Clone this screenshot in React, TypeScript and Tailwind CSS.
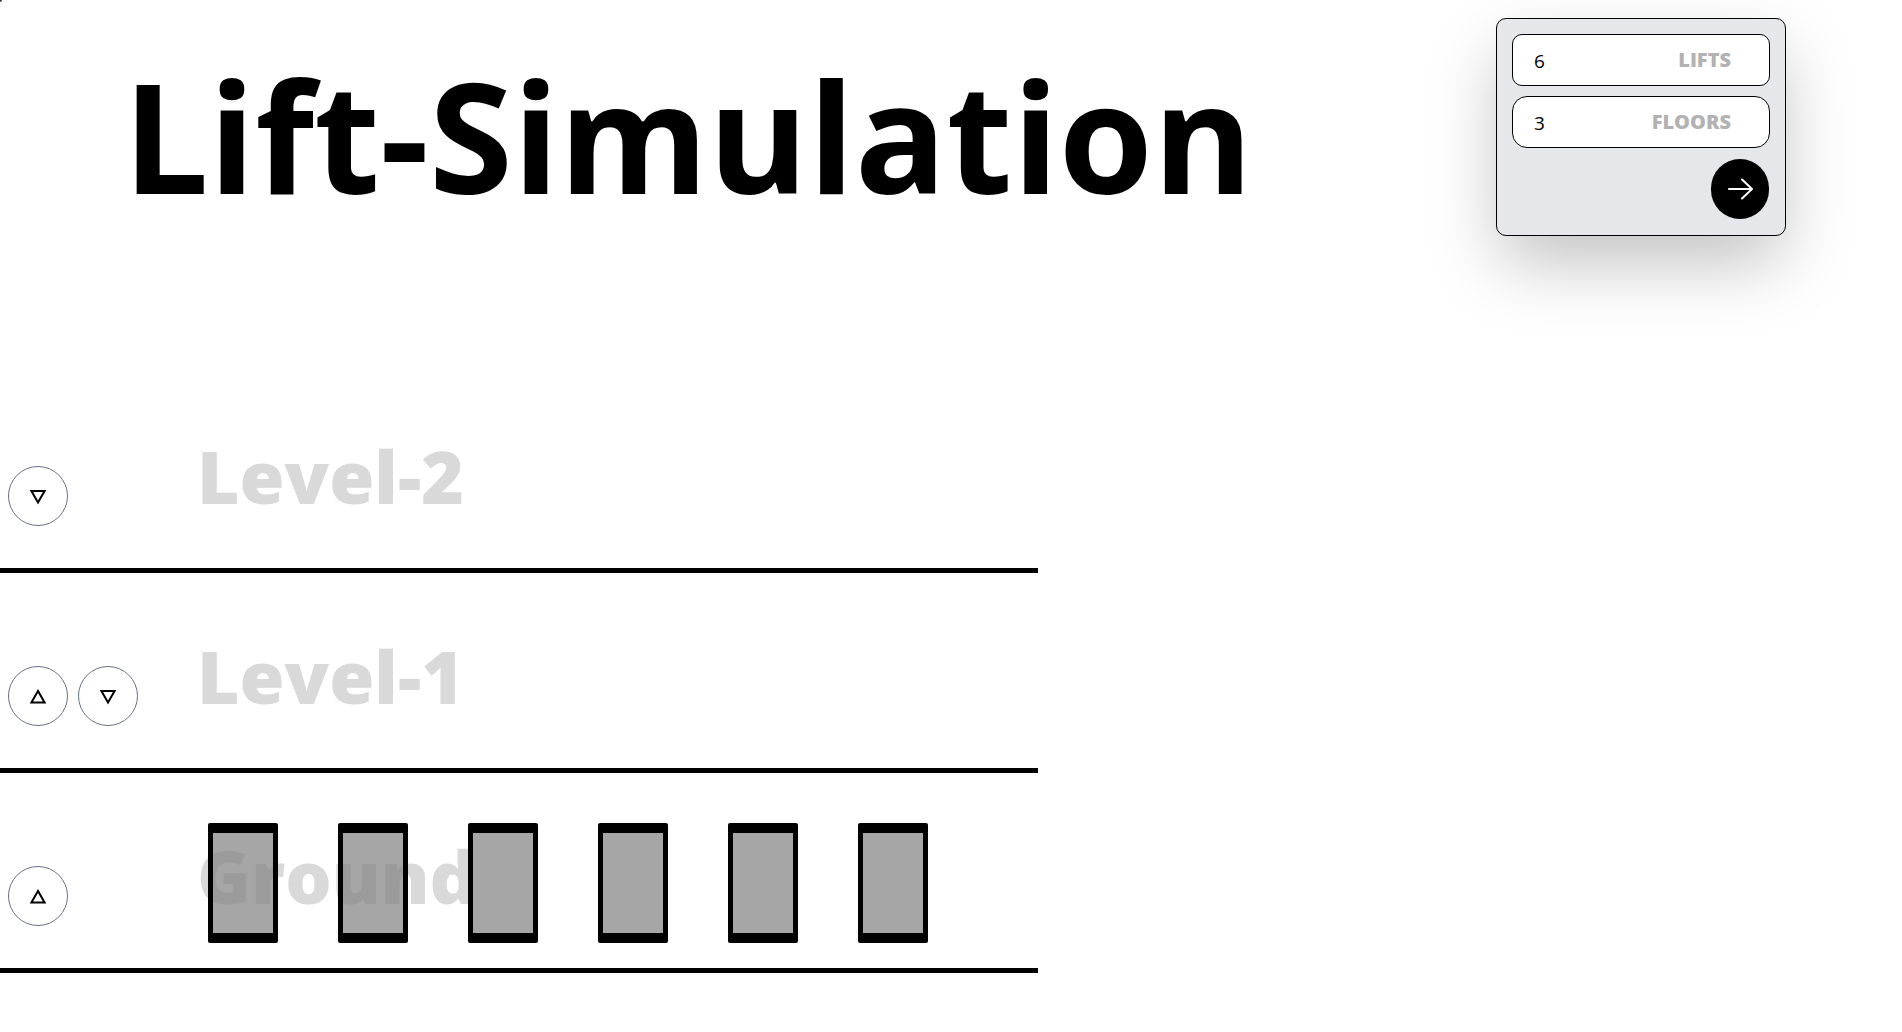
import { useState } from "react";

type Direction = "up" | "down";

interface Floor {
  name: string;
  calls: Direction[];
}

function buildFloors(count: number): Floor[] {
  return Array.from({ length: count }, (_, i) => {
    const level = count - 1 - i;
    const calls: Direction[] = [];
    if (level < count - 1) calls.push("up");
    if (level > 0) calls.push("down");
    return { name: level === 0 ? "Ground" : `Level-${level}`, calls };
  });
}

function CallButton({ direction }: { direction: Direction }) {
  return (
    <button
      type="button"
      aria-label={direction === "up" ? "Call lift up" : "Call lift down"}
      className="flex size-[60px] items-center justify-center rounded-full border border-gray-500 bg-white"
    >
      <svg width="18" height="18" viewBox="0 0 18 18" fill="none" stroke="#000" strokeWidth="2">
        <path d={direction === "up" ? "M9 4 L15.6 15.5 H2.4 Z" : "M9 15.5 L15.6 4 H2.4 Z"} />
      </svg>
    </button>
  );
}

function Field({
  id,
  label,
  value,
  onChange,
  rounding,
}: {
  id: string;
  label: string;
  value: string;
  onChange: (value: string) => void;
  rounding: string;
}) {
  return (
    <div className={`flex h-[52px] items-center border border-black bg-white pr-[38px] pl-[21px] ${rounding}`}>
      <input
        id={id}
        type="text"
        inputMode="numeric"
        value={value}
        onChange={(e) => onChange(e.target.value)}
        className="w-0 flex-1 pt-0.5 text-[19px] leading-7 outline-none"
      />
      <label htmlFor={id} className="text-xl leading-6 font-black text-[#b2b2b2]">
        {label}
      </label>
    </div>
  );
}

function Lift() {
  return (
    <div className="h-[120px] w-[70px] rounded-xs border-x-5 border-y-10 border-black bg-[rgba(128,128,128,0.7)] bg-clip-padding" />
  );
}

export default function App() {
  const [lifts, setLifts] = useState("6");
  const [floors, setFloors] = useState("3");
  const liftCount = Number(lifts) || 0;
  const rows = buildFloors(Number(floors) || 0);

  return (
    <div className="min-h-screen bg-white font-['Open_Sans','Noto_Sans',sans-serif] text-black">
      <div className="absolute top-0 left-0 size-0.5 rounded-br-full bg-neutral-700" />
      <header className="flex h-[373px] items-start justify-between pt-[18px] pr-[116px] pl-[123px]">
        <h1 className="pt-3 text-[152px] leading-[212px] font-bold">Lift-Simulation</h1>
        <form
          onSubmit={(e) => e.preventDefault()}
          className="flex h-[218px] w-[290px] flex-col gap-2.5 rounded-[10px] border border-black bg-[#e5e7eb] p-[15px] shadow-[0_30px_70px_-5px_rgba(0,0,0,0.25)]"
        >
          <Field id="lifts" label="LIFTS" value={lifts} onChange={setLifts} rounding="rounded-[10px]" />
          <Field id="floors" label="FLOORS" value={floors} onChange={setFloors} rounding="rounded-[15px]" />
          <button
            type="submit"
            aria-label="Start"
            className="mt-px mr-px flex h-[60px] w-[58px] items-center justify-center self-end rounded-full bg-black"
          >
            <svg
              width="26"
              height="22"
              viewBox="0 0 26 22"
              fill="none"
              stroke="#fff"
              strokeWidth="2"
              strokeLinecap="round"
              strokeLinejoin="round"
            >
              <path d="M2 11 H25 M15 1.5 L25 11 L15 20.5" />
            </svg>
          </button>
        </form>
      </header>

      <main className="w-fit">
        {rows.map((floor, i) => (
          <section
            key={floor.name}
            className="grid h-[200px] grid-cols-[197px_1fr] border-b-5 border-black"
          >
            <div className="flex gap-2.5 pt-[93px] pl-2">
              {floor.calls.map((direction) => (
                <CallButton key={direction} direction={direction} />
              ))}
            </div>
            <h2 className="col-start-2 row-start-1 pt-[53px] text-[73px] leading-[100px] font-black text-[#d9d9d9]">
              {floor.name}
            </h2>
            {i === rows.length - 1 && (
              <div className="z-10 col-start-2 row-start-1 flex gap-[60px] self-end pr-[110px] pb-[25px] pl-[11px]">
                {Array.from({ length: liftCount }, (_, n) => (
                  <Lift key={n} />
                ))}
              </div>
            )}
          </section>
        ))}
      </main>
    </div>
  );
}
